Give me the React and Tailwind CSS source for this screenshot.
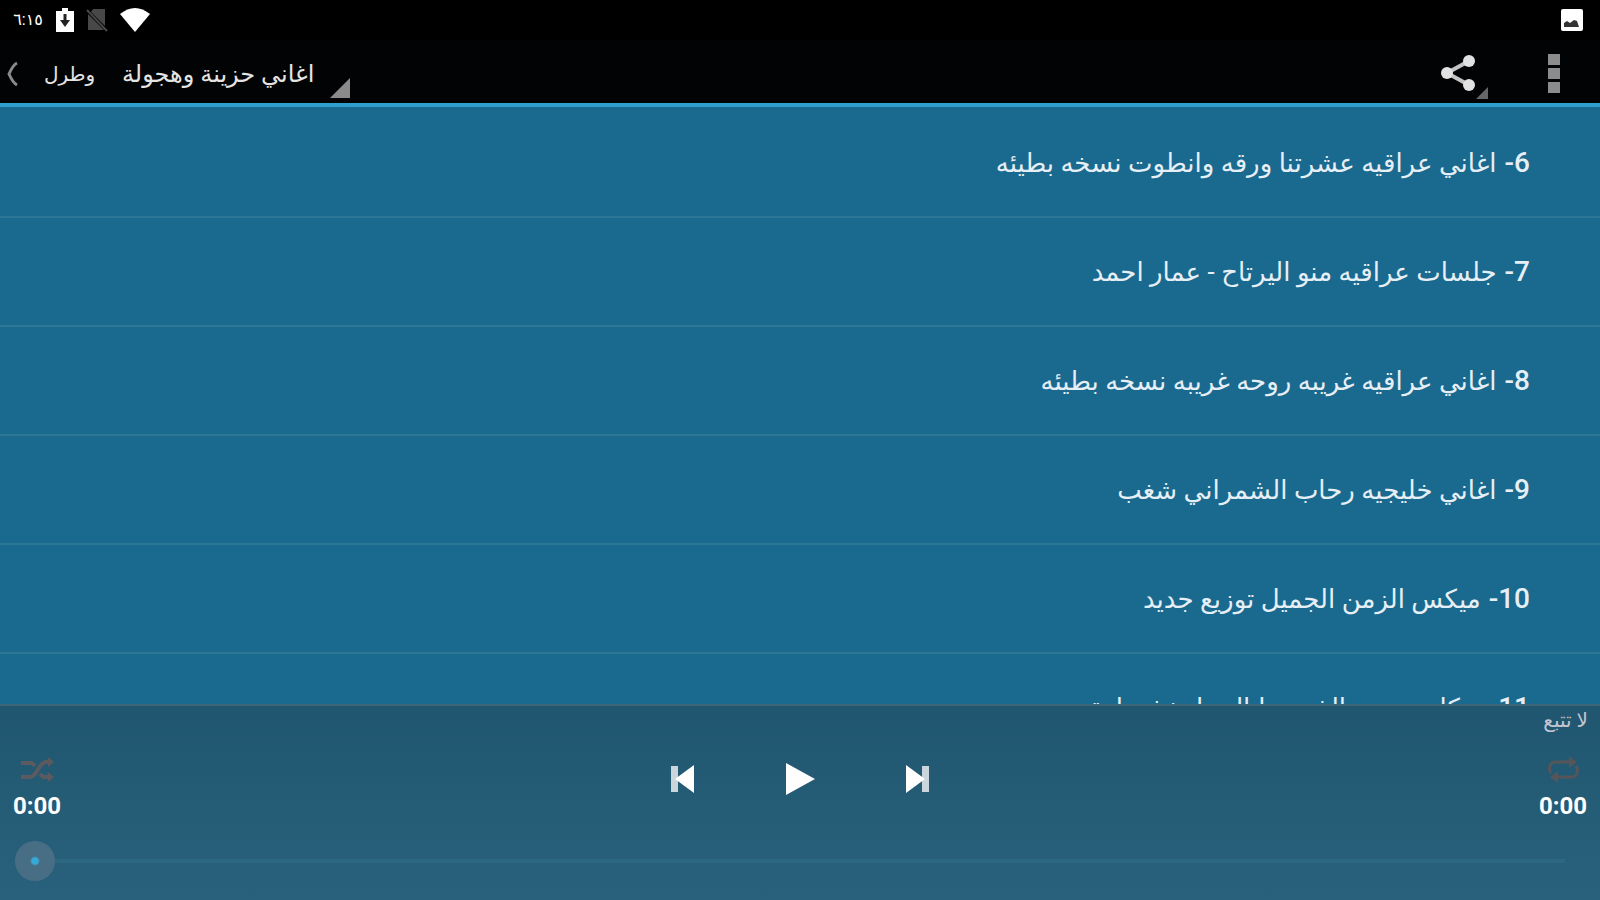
import React, { useState } from "react";

const songs = [
  { id: 6, title: "اغاني عراقيه عشرتنا ورقه وانطوت نسخه بطيئه" },
  { id: 7, title: "جلسات عراقيه منو اليرتاح - عمار احمد" },
  { id: 8, title: "اغاني عراقيه غريبه روحه غريبه نسخه بطيئه" },
  { id: 9, title: "اغاني خليجيه رحاب الشمراني شغب" },
  { id: 10, title: "ميكس الزمن الجميل توزيع جديد" },
  { id: 11, title: "دبكات حمود الذيب وانال ما نخذ سادة" }
];

function StatusBar() {
  return (
    <div className="flex h-10 shrink-0 items-center gap-3 bg-black pl-3 pr-4 text-white">
      <span className="w-8 text-center text-base leading-5">٦:١٥</span>
      {/* battery */}
      <svg className="h-6 w-[18px]" viewBox="0 0 18 24" fill="none">
        <path d="M6 0h6v3h6v21H0V3h6z" fill="#fff" />
        <path d="M9 6v9" stroke="#222" strokeWidth="3" />
        <path d="M4 12h10l-5 7z" fill="#222" />
      </svg>
      {/* no sim */}
      <svg className="h-6 w-[22px]" viewBox="0 0 22 24">
        <path d="M7 1h12v17L5 4zM2 6l16 16H2z" fill="#484848" />
        <path d="M1 2l20 21" stroke="#484848" strokeWidth="2" />
      </svg>
      {/* wifi */}
      <svg className="h-6 w-[30px]" viewBox="0 0 30 24">
        <path d="M15 24L0 6Q15-6 30 6z" fill="#fff" />
      </svg>
      {/* picture notification */}
      <svg className="ml-auto h-6 w-6" viewBox="0 0 24 24">
        <rect x="1" y="1" width="22" height="22" rx="2" fill="#fff" />
        <path d="M4 19v-4l3-2 3 2 4-3 3 1 2 6z" fill="#333" />
      </svg>
    </div>
  );
}

function ActionBar() {
  return (
    <header className="flex h-[67px] shrink-0 items-center border-b-4 border-[#2f9fcd] bg-[#020304] text-[#e4e4e4]">
      <button className="flex items-center pt-1" type="button">
        <svg className="ml-1 h-8 w-6" viewBox="0 0 24 32" fill="none">
          <path d="M13 5Q9 7 5 16q4 9 8 11" stroke="#8a8a8a" strokeWidth="3" />
        </svg>
        <span className="ml-4 w-12 text-center text-xl leading-8">وطرل</span>
      </button>
      <button className="ml-[30px] flex h-full items-center" type="button">
        <span className="pt-1 text-2xl leading-8">اغاني حزينة وهجولة</span>
        <svg className="mb-[5px] ml-4 h-5 w-5 self-end" viewBox="0 0 20 20">
          <path d="M20 0v20H0z" fill="#8b8b8b" />
        </svg>
      </button>
      <button className="ml-auto mr-[60px] flex h-full items-center" type="button" aria-label="مشاركة">
        <svg className="h-[38px] w-9" viewBox="0 0 36 38" fill="#e2e2e2">
          <path d="M29 8L7 20l22 12" fill="none" stroke="#c4c4c4" strokeWidth="4" />
          <circle cx="29" cy="8" r="6" />
          <circle cx="7" cy="20" r="6" />
          <circle cx="29" cy="32" r="6" />
        </svg>
        <svg className="mb-1 h-3 w-3 self-end" viewBox="0 0 14 14">
          <path d="M14 0v14H0z" fill="#666" />
        </svg>
      </button>
      <button className="mr-10 flex flex-col gap-[3px] pt-1" type="button" aria-label="المزيد">
        <span className="h-[11px] w-3 bg-[#8c8c8c]" />
        <span className="h-[11px] w-3 bg-[#8c8c8c]" />
        <span className="h-[11px] w-3 bg-[#8c8c8c]" />
      </button>
    </header>
  );
}

function SongList() {
  return (
    <ul dir="rtl" className="min-h-0 flex-1 overflow-hidden bg-[#1a698e] pt-[2px]">
      {songs.map(song => (
        <li key={song.id} className="h-[109px] border-b-2 border-[#2c7796]">
          <button className="flex h-full w-full items-center gap-2 pr-[70px] text-[#e6eff5]" type="button">
            <span className="text-[28px] font-medium leading-10">{song.id}-</span>
            <span className="text-[26px] leading-10">{song.title}</span>
          </button>
        </li>
      ))}
    </ul>
  );
}

function Player() {
  const [position, setPosition] = useState(0);

  return (
    <footer className="h-[196px] shrink-0 border-t-2 border-[#3e6478] bg-linear-to-b from-[#20566f] to-[#29617c] text-white">
      <div dir="rtl" className="h-8 px-3 text-xl leading-7 text-[#c3c5d0]">لا تتبع</div>
      <div className="flex h-[92px] justify-between">
        <div className="flex w-[74px] flex-col items-center pt-4">
          <button type="button" aria-label="ترتيب عشوائي">
            <svg className="h-8 w-9" viewBox="0 0 36 32" fill="none" stroke="#5a5a60" strokeWidth="4">
              <path d="M2 9h11l3 3M2 23h9c7 0 9-15 16-15h5M21 20l3 3h8" />
              <path d="M29 3l6 5-6 5zM29 18l6 5-6 5z" fill="#5a5a60" stroke="none" />
            </svg>
          </button>
          <time className="text-2xl font-bold leading-10">0:00</time>
        </div>
        <div className="flex items-center gap-[88px] pb-[10px]">
          <button type="button" aria-label="السابق">
            <svg className="h-8 w-7" viewBox="0 0 28 32">
              <path d="M2 3h7v26H2z" fill="#cbd6dc" />
              <path d="M25 2v28L6 16z" fill="#fff" />
            </svg>
          </button>
          <button type="button" aria-label="تشغيل">
            <svg className="h-8 w-[30px]" viewBox="0 0 30 32">
              <path d="M1 0l29 16L1 32z" fill="#fff" />
            </svg>
          </button>
          <button type="button" aria-label="التالي">
            <svg className="h-8 w-7" viewBox="0 0 28 32">
              <path d="M19 3h7v26h-7z" fill="#cbd6dc" />
              <path d="M3 2v28l19-14z" fill="#fff" />
            </svg>
          </button>
        </div>
        <div className="flex w-[74px] flex-col items-center pt-4">
          <button type="button" aria-label="تكرار">
            <svg className="h-8 w-9" viewBox="0 0 36 32" fill="none" stroke="#56565a" strokeWidth="3">
              <path d="M6 19c-3-4-1-11 4-11h14M31 12c3 4 1 11-4 11H12" />
              <path d="M24 2l8 6-8 6zM13 17l-8 6 8 6z" fill="#56565a" stroke="none" />
            </svg>
          </button>
          <time className="text-2xl font-bold leading-10">0:00</time>
        </div>
      </div>
      <div className="flex h-[60px] items-center pl-[15px] pr-[35px] pt-[2px]">
        <input
          type="range"
          min="0"
          max="100"
          value={position}
          onChange={e => setPosition(Number(e.target.value))}
          aria-label="موضع التشغيل"
          className="h-10 w-full appearance-none bg-transparent [&::-webkit-slider-runnable-track]:h-1 [&::-webkit-slider-runnable-track]:bg-[#2c6880] [&::-webkit-slider-thumb]:-mt-[18px] [&::-webkit-slider-thumb]:size-10 [&::-webkit-slider-thumb]:appearance-none [&::-webkit-slider-thumb]:rounded-full [&::-webkit-slider-thumb]:bg-[radial-gradient(circle,#38a9d6_3px,#476e84_5px)]"
        />
      </div>
    </footer>
  );
}

export default function App() {
  return (
    <div className="flex h-screen flex-col font-[Roboto,'DejaVu_Sans',sans-serif]">
      <StatusBar />
      <ActionBar />
      <SongList />
      <Player />
    </div>
  );
}
